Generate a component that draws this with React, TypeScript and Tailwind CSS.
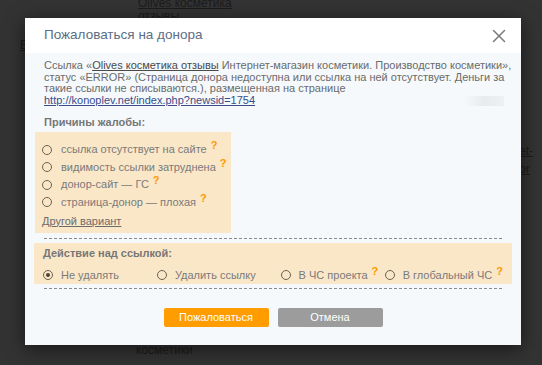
import { X } from 'lucide-react';

const FONT = { fontFamily: '"Liberation Sans", Arial, sans-serif' };

const reasons = [
  'ссылка отсутствует на сайте',
  'видимость ссылки затруднена',
  'донор-сайт — ГС',
  'страница-донор — плохая',
];

const actions = [
  { label: 'Не удалять', hint: false, checked: true, width: 'w-[116px]' },
  { label: 'Удалить ссылку', hint: false, checked: false, width: 'w-[126px]' },
  { label: 'В ЧС проекта', hint: true, checked: false, width: 'w-[106px]' },
  { label: 'В глобальный ЧС', hint: true, checked: false, width: '' },
];

function Radio({ checked }: { checked?: boolean }) {
  return (
    <span className="flex h-[10px] w-[10px] shrink-0 items-center justify-center rounded-full border border-[#6d6250] bg-transparent">
      {checked && <span className="h-[4px] w-[4px] rounded-full bg-[#4d4436]" />}
    </span>
  );
}

function Hint() {
  return <span className="ml-[4px] -mt-[8px] text-[11px] font-bold leading-none text-[#ff9900]">?</span>;
}

function Dashed() {
  return <div className="mx-[19px] border-t border-dashed border-[#8a8a8a]" />;
}

export default function App() {
  return (
    <div className="relative h-[365px] w-[542px] overflow-hidden bg-[#333333] text-[#1c1c1c]" style={FONT}>
      {/* page behind the overlay */}
      <div className="flex flex-col text-[12px]">
        <div className="ml-[138px] mt-[-3px] leading-[13px]">
          <span className="underline">Olives косметика</span>
          <br />
          <span className="underline">отзывы</span>
        </div>
        <div className="mt-[13px] ml-[20px] underline">В</div>
        <div className="mt-[88px] ml-[519px] underline">et-pr</div>
        <div className="mt-[163px] ml-[136px]">косметики</div>
      </div>

      <div className="absolute left-[25px] top-[18px] w-[496px] bg-[#f5f9fb] shadow-[0_4px_18px_rgba(0,0,0,0.55)]">
        <div className="flex h-[35px] items-center justify-between bg-white pl-[19px] pr-[11px]">
          <h1 className="text-[13.5px] text-[#5b6e84]">Пожаловаться на донора</h1>
          <X size={22} strokeWidth={1.6} className="text-[#7a7a7a]" />
        </div>

        <div className="pb-[18px] pt-[7px]">
          <p className="whitespace-nowrap px-[19px] text-[11px] leading-[11.7px] text-[#6b6b6b]">
            Ссылка «<span className="text-[#4a4a4a] underline">Olives косметика отзывы</span> Интернет-магазин косметики. Производство косметики»,
            <br />
            статус «ERROR» (Страница донора недоступна или ссылка на ней отсутствует. Деньги за
            <br />
            такие ссылки не списываются.), размещенная на странице
            <br />
            <span className="flex items-center justify-between">
              <span className="text-[#3a4d8a] underline">http://konoplev.net/index.php?newsid=1754</span>
              <span className="mr-[-2px] h-[10px] w-[40px] bg-gradient-to-r from-[#f5f9fb] via-[#e8ebee] to-[#eef0f2]" />
            </span>
          </p>

          <div className="mt-[9px] px-[19px] text-[11px] font-bold leading-[13px] text-[#777]">Причины жалобы:</div>

          <div className="ml-[10px] mt-[3px] w-[196px] bg-[#fae7c8] px-[7px] pb-[5px] pt-[9px] text-[11px] leading-[13px] text-[#7a7a7a]">
            {reasons.map((r) => (
              <div key={r} className="flex h-[17.5px] items-center whitespace-nowrap">
                <Radio />
                <span className="ml-[9px]">{r}</span>
                <Hint />
              </div>
            ))}
            <div className="mt-[4px] text-[#6b6b6b] underline">Другой вариант</div>
          </div>

          <div className="mt-[5px]">
            <Dashed />
          </div>

          <div className="mx-[9px] mt-[4px] bg-[#fae7c8] px-[9px] pb-[2px] pt-[4px] text-[11px] leading-[13px]">
            <div className="h-[13px] font-bold text-[#777]">Действие над ссылкой:</div>
            <div className="mt-[9px] flex h-[13px] items-center whitespace-nowrap text-[#7a7a7a]">
              {actions.map((a) => (
                <div key={a.label} className={`flex items-center ${a.width}`}>
                  <Radio checked={a.checked} />
                  <span className="ml-[8px]">{a.label}</span>
                  {a.hint && <Hint />}
                </div>
              ))}
            </div>
          </div>

          <div className="mt-[4px]">
            <Dashed />
          </div>

          <div className="mt-[19px] flex justify-center gap-[9px] text-[11px] text-white">
            <button className="h-[19px] w-[105px] rounded-[2px] bg-[#ff9c00]">Пожаловаться</button>
            <button className="h-[19px] w-[105px] rounded-[2px] bg-[#9c9c9c]">Отмена</button>
          </div>
        </div>
      </div>
    </div>
  );
}
